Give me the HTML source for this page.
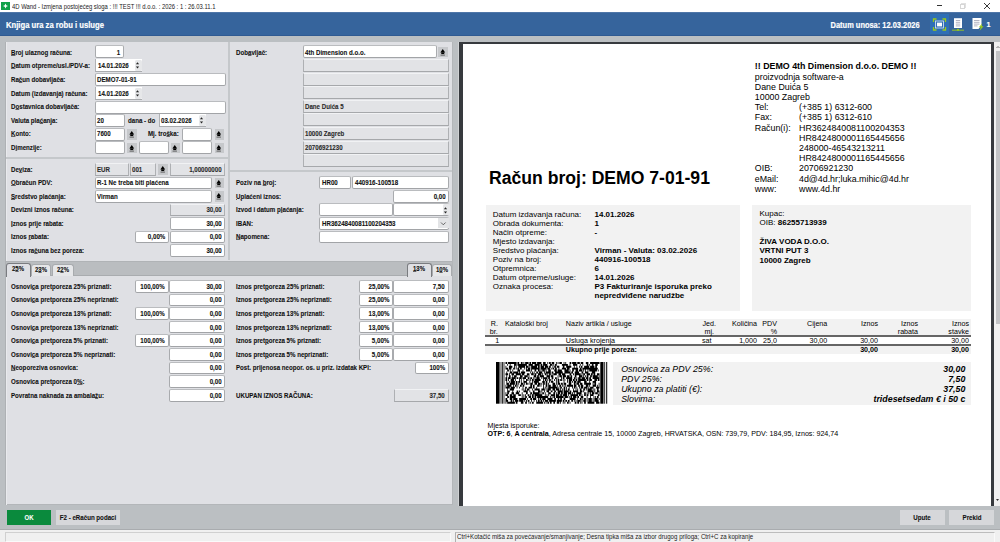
<!DOCTYPE html><html><head><meta charset="utf-8"><style>
html,body{margin:0;padding:0;width:1000px;height:542px;overflow:hidden;background:#bbbfc2;}
body{position:relative;font-family:"Liberation Sans",sans-serif;}
.t{position:absolute;white-space:nowrap;line-height:normal;}
.p{-webkit-text-stroke:0.1px currentColor;}
u{text-decoration-thickness:1px;text-underline-offset:-0.3px;text-decoration-color:rgba(0,0,0,.55);}
.r{position:absolute;box-sizing:border-box;}
</style></head><body>
<div class="r" style="left:0px;top:0px;width:1000px;height:12px;background:#ffffff;"></div>
<div class="r" style="left:1px;top:2px;width:9px;height:8px;background:#12a14a;"></div>
<svg class="r" style="left:1px;top:2px" width="9" height="8"><path d="M4.5 1.5 L5.3 3.2 L7 4 L5.3 4.8 L4.5 6.5 L3.7 4.8 L2 4 L3.7 3.2 Z" fill="#fff"/></svg>
<div class="t " style="left:12.0px;top:2.5px;font-size:7px;font-weight:normal;font-style:normal;color:#1a1a1a;transform:scaleX(0.84);transform-origin:0 0;">4D Wand - Izmjena postojećeg sloga : !!! TEST !!! d.o.o. : 2026 : 1 : 26.03.11.1</div>
<div class="r" style="left:937px;top:5px;width:5px;height:1px;background:#333;"></div>
<div class="r" style="left:961px;top:3px;width:5px;height:5px;background:transparent;border:1px solid #e0e0e0;"></div>
<div class="r" style="left:960px;top:4px;width:5px;height:5px;background:#fff;border:1px solid #d6d6d6;"></div>
<svg class="r" style="left:983px;top:2px" width="8" height="8"><path d="M1 1 L7 7 M7 1 L1 7" stroke="#222" stroke-width="0.9"/></svg>
<div class="r" style="left:0px;top:12px;width:1000px;height:24px;background:#36649c;"></div>
<div class="r" style="left:0px;top:12px;width:1000px;height:1px;background:#4f76a8;"></div>
<div class="r" style="left:0px;top:35px;width:1000px;height:1px;background:#2f5a92;"></div>
<div class="t " style="left:6.0px;top:19.9px;font-size:9px;font-weight:bold;font-style:normal;color:#fff;transform:scaleX(0.852);transform-origin:0 0;-webkit-text-stroke:0.2px #fff;">Knjiga ura za robu i usluge</div>
<div class="t " style="right:80.5px;top:19.9px;font-size:9px;font-weight:bold;font-style:normal;color:#fff;transform:scaleX(0.827);transform-origin:100% 0;-webkit-text-stroke:0.2px #fff;">Datum unosa: 12.03.2026</div>
<div class="r" style="left:930px;top:14px;width:19px;height:20px;background:#2f6fb5;"></div>
<svg class="r" style="left:930px;top:14px" width="19" height="20">
<path d="M3.5 8 V5 H6.5 M12.5 5 H15.5 V8 M15.5 13 V16 H12.5 M6.5 16 H3.5 V13" stroke="#9ccc18" stroke-width="1.3" fill="none"/>
<rect x="5.5" y="7" width="8" height="7" fill="none" stroke="#dfe8f5" stroke-width="0.8"/>
<rect x="7" y="8.6" width="5" height="3.8" fill="#fff"/></svg>
<svg class="r" style="left:951px;top:16px" width="14" height="16">
<rect x="3" y="2.2" width="8" height="9.8" fill="#fff"/>
<path d="M4.8 4.5 H9.2 M4.8 6.3 H9.2 M4.8 8.1 H9.2 M4.8 9.9 H9.2" stroke="#aab" stroke-width="0.9"/>
<path d="M1 14.2 H13" stroke="#9ccc18" stroke-width="0.9"/><circle cx="7" cy="13.8" r="1.1" fill="#9ccc18"/></svg>
<svg class="r" style="left:971px;top:16px" width="14" height="16">
<path d="M1.5 2 H10.5 V9.5 L7.5 13 H1.5 Z" fill="#fff"/>
<path d="M3 4.5 H8.5 M3 6.3 H8.5 M3 8.1 H8.5 M3 9.9 H6.5" stroke="#aab" stroke-width="0.9"/>
<path d="M11.2 7.5 L7.8 11.3 H9.8 L8.6 14.8 L12.6 10.3 H10.5 Z" fill="#9ccc18"/></svg>
<div class="t " style="right:10.0px;top:19.6px;font-size:8px;font-weight:bold;font-style:normal;color:#fff;transform:scaleX(0.9);transform-origin:100% 0;-webkit-text-stroke:0.2px #fff;">1</div>
<div class="r" style="left:5px;top:42px;width:448px;height:463px;background:#dfe0e4;border-left:1px solid #aeb1b4;border-right:1px solid #b3b6b9;border-bottom:1px solid #b3b6b9;"></div>
<div class="r" style="left:6px;top:42px;width:1px;height:463px;background:#e9eaed;"></div>
<div class="r" style="left:228px;top:42px;width:2px;height:218px;background:#c5c8cb;"></div>
<div class="r" style="left:6px;top:157px;width:222px;height:2px;background:#c5c8cb;"></div>
<div class="r" style="left:230px;top:170px;width:222px;height:2px;background:#c5c8cb;"></div>
<div class="r" style="left:6px;top:261px;width:446px;height:15px;background:#babdc0;border-top:1px solid #b0b3b6;border-bottom:1px solid #a9acaf;"></div>
<div class="t p" style="left:11.0px;top:47.7px;font-size:7.5px;font-weight:bold;font-style:normal;color:#111;transform:scaleX(0.82);transform-origin:0 0;"><u>B</u>roj ulaznog računa:</div>
<div class="t p" style="left:11.0px;top:61.3px;font-size:7.5px;font-weight:bold;font-style:normal;color:#111;transform:scaleX(0.82);transform-origin:0 0;"><u>D</u>atum otpreme/usl./PDV-a:</div>
<div class="t p" style="left:11.0px;top:74.9px;font-size:7.5px;font-weight:bold;font-style:normal;color:#111;transform:scaleX(0.82);transform-origin:0 0;">Ra<u>č</u>un dobavljača:</div>
<div class="t p" style="left:11.0px;top:88.5px;font-size:7.5px;font-weight:bold;font-style:normal;color:#111;transform:scaleX(0.82);transform-origin:0 0;">Dat<u>u</u>m (izdavanja) računa:</div>
<div class="t p" style="left:11.0px;top:102.1px;font-size:7.5px;font-weight:bold;font-style:normal;color:#111;transform:scaleX(0.82);transform-origin:0 0;">D<u>o</u>stavnica dobavljača:</div>
<div class="t p" style="left:11.0px;top:115.7px;font-size:7.5px;font-weight:bold;font-style:normal;color:#111;transform:scaleX(0.82);transform-origin:0 0;">Valuta pla<u>ć</u>anja:</div>
<div class="t p" style="left:11.0px;top:129.3px;font-size:7.5px;font-weight:bold;font-style:normal;color:#111;transform:scaleX(0.82);transform-origin:0 0;"><u>K</u>onto:</div>
<div class="t p" style="left:11.0px;top:142.9px;font-size:7.5px;font-weight:bold;font-style:normal;color:#111;transform:scaleX(0.82);transform-origin:0 0;">D<u>i</u>menzije:</div>
<div class="r" style="left:95px;top:45px;width:29px;height:13px;background:#ffffff;border:1px solid #a9abae;border-radius:2px;border-top-color:#babcbf;border-bottom:1.6px solid #a2a4a7;"></div>
<div class="t p" style="right:880.0px;top:47.7px;font-size:7.5px;font-weight:bold;font-style:normal;color:#111;transform:scaleX(0.82);transform-origin:100% 0;">1</div>
<div class="r" style="left:95px;top:59px;width:47px;height:13px;background:#ffffff;border-left:1px solid #b0b2b5;border-bottom:1.5px solid #a9abae;"></div>
<div class="t p" style="left:97.5px;top:61.3px;font-size:7.5px;font-weight:bold;font-style:normal;color:#111;transform:scaleX(0.82);transform-origin:0 0;">14.01.2026</div>
<div class="r" style="left:135px;top:60px;width:7px;height:11px;background:#e6e7e9;border-radius:1.5px;"></div>
<svg class="r" style="left:134px;top:59px" width="7" height="13"><path d="M1.9 5.3 L3.5 3.3 L5.1 5.3 Z M1.9 7.6 L3.5 9.6 L5.1 7.6 Z" fill="#222"/></svg>
<div class="r" style="left:95px;top:73px;width:131px;height:13px;background:#ffffff;border:1px solid #a9abae;border-radius:2px;border-top-color:#babcbf;border-bottom:1.6px solid #a2a4a7;"></div>
<div class="t p" style="left:97.0px;top:74.9px;font-size:7.5px;font-weight:bold;font-style:normal;color:#111;transform:scaleX(0.82);transform-origin:0 0;">DEMO7-01-91</div>
<div class="r" style="left:95px;top:87px;width:47px;height:13px;background:#ffffff;border-left:1px solid #b0b2b5;border-bottom:1.5px solid #a9abae;"></div>
<div class="t p" style="left:97.5px;top:88.5px;font-size:7.5px;font-weight:bold;font-style:normal;color:#111;transform:scaleX(0.82);transform-origin:0 0;">14.01.2026</div>
<div class="r" style="left:135px;top:88px;width:7px;height:11px;background:#e6e7e9;border-radius:1.5px;"></div>
<svg class="r" style="left:134px;top:87px" width="7" height="13"><path d="M1.9 5.3 L3.5 3.3 L5.1 5.3 Z M1.9 7.6 L3.5 9.6 L5.1 7.6 Z" fill="#222"/></svg>
<div class="r" style="left:95px;top:101px;width:131px;height:13px;background:#ffffff;border:1px solid #a9abae;border-radius:2px;border-top-color:#babcbf;border-bottom:1.6px solid #a2a4a7;"></div>
<div class="r" style="left:95px;top:114px;width:30px;height:13px;background:#ffffff;border:1px solid #a9abae;border-radius:2px;border-top-color:#babcbf;border-bottom:1.6px solid #a2a4a7;"></div>
<div class="t p" style="left:97.0px;top:115.7px;font-size:7.5px;font-weight:bold;font-style:normal;color:#111;transform:scaleX(0.82);transform-origin:0 0;">20</div>
<div class="t p" style="left:128.0px;top:115.7px;font-size:7.5px;font-weight:bold;font-style:normal;color:#111;transform:scaleX(0.82);transform-origin:0 0;">dana - do</div>
<div class="r" style="left:159px;top:114px;width:47px;height:13px;background:#ffffff;border-left:1px solid #b0b2b5;border-bottom:1.5px solid #a9abae;"></div>
<div class="t p" style="left:161.0px;top:115.7px;font-size:7.5px;font-weight:bold;font-style:normal;color:#111;transform:scaleX(0.82);transform-origin:0 0;">03.02.2026</div>
<div class="r" style="left:199px;top:115px;width:7px;height:11px;background:#e6e7e9;border-radius:1.5px;"></div>
<svg class="r" style="left:198px;top:114px" width="7" height="13"><path d="M1.9 5.3 L3.5 3.3 L5.1 5.3 Z M1.9 7.6 L3.5 9.6 L5.1 7.6 Z" fill="#222"/></svg>
<div class="r" style="left:95px;top:128px;width:30px;height:13px;background:#ffffff;border:1px solid #a9abae;border-radius:2px;border-top-color:#babcbf;border-bottom:1.6px solid #a2a4a7;"></div>
<div class="t p" style="left:97.0px;top:129.3px;font-size:7.5px;font-weight:bold;font-style:normal;color:#111;transform:scaleX(0.82);transform-origin:0 0;">7600</div>
<div class="r" style="left:127px;top:129px;width:10px;height:11px;background:#c6c8cb;"></div>
<svg class="r" style="left:127px;top:129px" width="10" height="10"><path d="M2.35 5.55 L4.75 2.05 L7.15 5.55 Z" fill="#000"/><rect x="3.25" y="5.35" width="3" height="1.7" fill="#000"/><rect x="2.55" y="7.65" width="4.4" height="0.9" fill="#555"/></svg>
<div class="t p" style="left:148.0px;top:129.3px;font-size:7.5px;font-weight:bold;font-style:normal;color:#111;transform:scaleX(0.82);transform-origin:0 0;">Mj. tro<u>š</u>ka:</div>
<div class="r" style="left:182px;top:128px;width:30px;height:13px;background:#ffffff;border:1px solid #a9abae;border-radius:2px;border-top-color:#babcbf;border-bottom:1.6px solid #a2a4a7;"></div>
<div class="r" style="left:215px;top:129px;width:9px;height:11px;background:#c6c8cb;"></div>
<svg class="r" style="left:214px;top:129px" width="10" height="10"><path d="M2.35 5.55 L4.75 2.05 L7.15 5.55 Z" fill="#000"/><rect x="3.25" y="5.35" width="3" height="1.7" fill="#000"/><rect x="2.55" y="7.65" width="4.4" height="0.9" fill="#555"/></svg>
<div class="r" style="left:95px;top:141px;width:30px;height:13px;background:#ffffff;border:1px solid #a9abae;border-radius:2px;border-top-color:#babcbf;border-bottom:1.6px solid #a2a4a7;"></div>
<div class="r" style="left:127px;top:143px;width:10px;height:10px;background:#c6c8cb;"></div>
<svg class="r" style="left:127px;top:143px" width="10" height="10"><path d="M2.35 5.55 L4.75 2.05 L7.15 5.55 Z" fill="#000"/><rect x="3.25" y="5.35" width="3" height="1.7" fill="#000"/><rect x="2.55" y="7.65" width="4.4" height="0.9" fill="#555"/></svg>
<div class="r" style="left:139px;top:141px;width:30px;height:13px;background:#ffffff;border:1px solid #a9abae;border-radius:2px;border-top-color:#babcbf;border-bottom:1.6px solid #a2a4a7;"></div>
<div class="r" style="left:171px;top:143px;width:9px;height:10px;background:#c6c8cb;"></div>
<svg class="r" style="left:170px;top:143px" width="10" height="10"><path d="M2.35 5.55 L4.75 2.05 L7.15 5.55 Z" fill="#000"/><rect x="3.25" y="5.35" width="3" height="1.7" fill="#000"/><rect x="2.55" y="7.65" width="4.4" height="0.9" fill="#555"/></svg>
<div class="r" style="left:182px;top:141px;width:30px;height:13px;background:#ffffff;border:1px solid #a9abae;border-radius:2px;border-top-color:#babcbf;border-bottom:1.6px solid #a2a4a7;"></div>
<div class="r" style="left:215px;top:143px;width:9px;height:10px;background:#c6c8cb;"></div>
<svg class="r" style="left:214px;top:143px" width="10" height="10"><path d="M2.35 5.55 L4.75 2.05 L7.15 5.55 Z" fill="#000"/><rect x="3.25" y="5.35" width="3" height="1.7" fill="#000"/><rect x="2.55" y="7.65" width="4.4" height="0.9" fill="#555"/></svg>
<div class="t p" style="left:235.5px;top:47.7px;font-size:7.5px;font-weight:bold;font-style:normal;color:#111;transform:scaleX(0.82);transform-origin:0 0;">Dob<u>a</u>vljač:</div>
<div class="r" style="left:303px;top:45px;width:134px;height:13px;background:#ffffff;border:1px solid #a9abae;border-radius:2px;border-top-color:#babcbf;border-bottom:1.6px solid #a2a4a7;"></div>
<div class="t p" style="left:305.0px;top:47.7px;font-size:7.5px;font-weight:bold;font-style:normal;color:#111;transform:scaleX(0.82);transform-origin:0 0;">4th Dimension d.o.o.</div>
<div class="r" style="left:438px;top:47px;width:10px;height:10px;background:#c6c8cb;"></div>
<svg class="r" style="left:438px;top:47px" width="10" height="10"><path d="M2.35 5.55 L4.75 2.05 L7.15 5.55 Z" fill="#000"/><rect x="3.25" y="5.35" width="3" height="1.7" fill="#000"/><rect x="2.55" y="7.65" width="4.4" height="0.9" fill="#555"/></svg>
<div class="r" style="left:303px;top:59px;width:146px;height:13px;background:#e2e3e6;border:1px solid #aeb0b3;border-top-color:#f1f2f4;border-bottom:1.6px solid #a6a8ab;"></div>
<div class="r" style="left:303px;top:73px;width:146px;height:13px;background:#e2e3e6;border:1px solid #aeb0b3;border-top-color:#f1f2f4;border-bottom:1.6px solid #a6a8ab;"></div>
<div class="r" style="left:303px;top:86px;width:146px;height:13px;background:#e2e3e6;border:1px solid #aeb0b3;border-top-color:#f1f2f4;border-bottom:1.6px solid #a6a8ab;"></div>
<div class="r" style="left:303px;top:100px;width:146px;height:13px;background:#e2e3e6;border:1px solid #aeb0b3;border-top-color:#f1f2f4;border-bottom:1.6px solid #a6a8ab;"></div>
<div class="t p" style="left:305.0px;top:102.1px;font-size:7.5px;font-weight:bold;font-style:normal;color:#2a2a2a;transform:scaleX(0.82);transform-origin:0 0;">Dane Duića 5</div>
<div class="r" style="left:303px;top:113px;width:146px;height:13px;background:#e2e3e6;border:1px solid #aeb0b3;border-top-color:#f1f2f4;border-bottom:1.6px solid #a6a8ab;"></div>
<div class="r" style="left:303px;top:127px;width:146px;height:13px;background:#e2e3e6;border:1px solid #aeb0b3;border-top-color:#f1f2f4;border-bottom:1.6px solid #a6a8ab;"></div>
<div class="t p" style="left:305.0px;top:129.3px;font-size:7.5px;font-weight:bold;font-style:normal;color:#2a2a2a;transform:scaleX(0.82);transform-origin:0 0;">10000 Zagreb</div>
<div class="r" style="left:303px;top:141px;width:146px;height:13px;background:#e2e3e6;border:1px solid #aeb0b3;border-top-color:#f1f2f4;border-bottom:1.6px solid #a6a8ab;"></div>
<div class="t p" style="left:305.0px;top:142.9px;font-size:7.5px;font-weight:bold;font-style:normal;color:#2a2a2a;transform:scaleX(0.82);transform-origin:0 0;">20706921230</div>
<div class="r" style="left:303px;top:154px;width:146px;height:13px;background:#e2e3e6;border:1px solid #aeb0b3;border-top-color:#f1f2f4;border-bottom:1.6px solid #a6a8ab;"></div>
<div class="t p" style="left:11.0px;top:164.6px;font-size:7.5px;font-weight:bold;font-style:normal;color:#111;transform:scaleX(0.82);transform-origin:0 0;">De<u>v</u>iza:</div>
<div class="r" style="left:95px;top:163px;width:34px;height:13px;background:#e2e3e6;border:1px solid #aeb0b3;border-top-color:#f1f2f4;border-bottom:1.6px solid #a6a8ab;"></div>
<div class="t p" style="left:97.0px;top:164.6px;font-size:7.5px;font-weight:bold;font-style:normal;color:#2a2a2a;transform:scaleX(0.82);transform-origin:0 0;">EUR</div>
<div class="r" style="left:130px;top:163px;width:26px;height:13px;background:#e2e3e6;border:1px solid #aeb0b3;border-top-color:#f1f2f4;border-bottom:1.6px solid #a6a8ab;"></div>
<div class="t p" style="left:132.0px;top:164.6px;font-size:7.5px;font-weight:bold;font-style:normal;color:#2a2a2a;transform:scaleX(0.82);transform-origin:0 0;">001</div>
<div class="r" style="left:158px;top:164px;width:10px;height:11px;background:#c6c8cb;"></div>
<svg class="r" style="left:158px;top:164px" width="10" height="10"><path d="M2.35 5.55 L4.75 2.05 L7.15 5.55 Z" fill="#000"/><rect x="3.25" y="5.35" width="3" height="1.7" fill="#000"/><rect x="2.55" y="7.65" width="4.4" height="0.9" fill="#555"/></svg>
<div class="r" style="left:170px;top:163px;width:55px;height:13px;background:#e2e3e6;border:1px solid #aeb0b3;border-top-color:#f1f2f4;border-bottom:1.6px solid #a6a8ab;"></div>
<div class="t p" style="right:778.5px;top:164.6px;font-size:7.5px;font-weight:bold;font-style:normal;color:#2a2a2a;transform:scaleX(0.82);transform-origin:100% 0;">1,00000000</div>
<div class="t p" style="left:11.0px;top:178.2px;font-size:7.5px;font-weight:bold;font-style:normal;color:#111;transform:scaleX(0.82);transform-origin:0 0;"><u>O</u>bračun PDV:</div>
<div class="r" style="left:95px;top:177px;width:117px;height:12px;background:#ffffff;border:1px solid #a9abae;border-radius:2px;border-top-color:#babcbf;border-bottom:1.6px solid #a2a4a7;"></div>
<div class="t p" style="left:97.0px;top:178.2px;font-size:7.5px;font-weight:bold;font-style:normal;color:#111;transform:scaleX(0.82);transform-origin:0 0;">R-1 Ne treba biti plaćena</div>
<div class="r" style="left:215px;top:178px;width:9px;height:10px;background:#c6c8cb;"></div>
<svg class="r" style="left:214px;top:178px" width="10" height="10"><path d="M2.35 5.55 L4.75 2.05 L7.15 5.55 Z" fill="#000"/><rect x="3.25" y="5.35" width="3" height="1.7" fill="#000"/><rect x="2.55" y="7.65" width="4.4" height="0.9" fill="#555"/></svg>
<div class="t p" style="left:11.0px;top:191.7px;font-size:7.5px;font-weight:bold;font-style:normal;color:#111;transform:scaleX(0.82);transform-origin:0 0;"><u>S</u>redstvo plaćanja:</div>
<div class="r" style="left:95px;top:190px;width:117px;height:13px;background:#ffffff;border:1px solid #a9abae;border-radius:2px;border-top-color:#babcbf;border-bottom:1.6px solid #a2a4a7;"></div>
<div class="t p" style="left:97.0px;top:191.7px;font-size:7.5px;font-weight:bold;font-style:normal;color:#111;transform:scaleX(0.82);transform-origin:0 0;">Virman</div>
<div class="r" style="left:215px;top:191px;width:9px;height:11px;background:#c6c8cb;"></div>
<svg class="r" style="left:214px;top:191px" width="10" height="10"><path d="M2.35 5.55 L4.75 2.05 L7.15 5.55 Z" fill="#000"/><rect x="3.25" y="5.35" width="3" height="1.7" fill="#000"/><rect x="2.55" y="7.65" width="4.4" height="0.9" fill="#555"/></svg>
<div class="t p" style="left:11.0px;top:205.3px;font-size:7.5px;font-weight:bold;font-style:normal;color:#111;transform:scaleX(0.82);transform-origin:0 0;">Devizni iznos računa:</div>
<div class="r" style="left:170px;top:204px;width:55px;height:12px;background:#e2e3e6;border:1px solid #aeb0b3;border-top-color:#f1f2f4;border-bottom:1.6px solid #a6a8ab;"></div>
<div class="t p" style="right:778.5px;top:205.3px;font-size:7.5px;font-weight:bold;font-style:normal;color:#2a2a2a;transform:scaleX(0.82);transform-origin:100% 0;">30,00</div>
<div class="t p" style="left:11.0px;top:218.8px;font-size:7.5px;font-weight:bold;font-style:normal;color:#111;transform:scaleX(0.82);transform-origin:0 0;"><u>I</u>znos prije rabata:</div>
<div class="r" style="left:170px;top:217px;width:55px;height:13px;background:#ffffff;border:1px solid #a9abae;border-radius:2px;border-top-color:#babcbf;border-bottom:1.6px solid #a2a4a7;"></div>
<div class="t p" style="right:778.5px;top:218.8px;font-size:7.5px;font-weight:bold;font-style:normal;color:#111;transform:scaleX(0.82);transform-origin:100% 0;">30,00</div>
<div class="t p" style="left:11.0px;top:232.4px;font-size:7.5px;font-weight:bold;font-style:normal;color:#111;transform:scaleX(0.82);transform-origin:0 0;">Iznos <u>r</u>abata:</div>
<div class="r" style="left:135px;top:231px;width:34px;height:12px;background:#ffffff;border:1px solid #a9abae;border-radius:2px;border-top-color:#babcbf;border-bottom:1.6px solid #a2a4a7;"></div>
<div class="t p" style="right:835.0px;top:232.4px;font-size:7.5px;font-weight:bold;font-style:normal;color:#111;transform:scaleX(0.82);transform-origin:100% 0;">0,00%</div>
<div class="r" style="left:170px;top:231px;width:55px;height:12px;background:#ffffff;border:1px solid #a9abae;border-radius:2px;border-top-color:#babcbf;border-bottom:1.6px solid #a2a4a7;"></div>
<div class="t p" style="right:778.5px;top:232.4px;font-size:7.5px;font-weight:bold;font-style:normal;color:#111;transform:scaleX(0.82);transform-origin:100% 0;">0,00</div>
<div class="t p" style="left:11.0px;top:245.9px;font-size:7.5px;font-weight:bold;font-style:normal;color:#111;transform:scaleX(0.82);transform-origin:0 0;">Iznos ra<u>č</u>una bez poreza:</div>
<div class="r" style="left:170px;top:244px;width:55px;height:13px;background:#ffffff;border:1px solid #a9abae;border-radius:2px;border-top-color:#babcbf;border-bottom:1.6px solid #a2a4a7;"></div>
<div class="t p" style="right:778.5px;top:245.9px;font-size:7.5px;font-weight:bold;font-style:normal;color:#111;transform:scaleX(0.82);transform-origin:100% 0;">30,00</div>
<div class="t p" style="left:235.5px;top:177.9px;font-size:7.5px;font-weight:bold;font-style:normal;color:#111;transform:scaleX(0.82);transform-origin:0 0;">Poziv na <u>b</u>roj:</div>
<div class="r" style="left:319px;top:176px;width:32px;height:13px;background:#ffffff;border:1px solid #a9abae;border-radius:2px;border-top-color:#babcbf;border-bottom:1.6px solid #a2a4a7;"></div>
<div class="t p" style="left:321.5px;top:177.9px;font-size:7.5px;font-weight:bold;font-style:normal;color:#111;transform:scaleX(0.82);transform-origin:0 0;">HR00</div>
<div class="r" style="left:352px;top:176px;width:97px;height:13px;background:#ffffff;border:1px solid #a9abae;border-radius:2px;border-top-color:#babcbf;border-bottom:1.6px solid #a2a4a7;"></div>
<div class="t p" style="left:354.5px;top:177.9px;font-size:7.5px;font-weight:bold;font-style:normal;color:#111;transform:scaleX(0.82);transform-origin:0 0;">440916-100518</div>
<div class="t p" style="left:235.5px;top:191.5px;font-size:7.5px;font-weight:bold;font-style:normal;color:#111;transform:scaleX(0.82);transform-origin:0 0;"><u>U</u>plaćeni iznos:</div>
<div class="r" style="left:393px;top:190px;width:56px;height:13px;background:#ffffff;border:1px solid #a9abae;border-radius:2px;border-top-color:#babcbf;border-bottom:1.6px solid #a2a4a7;"></div>
<div class="t p" style="right:554.5px;top:191.5px;font-size:7.5px;font-weight:bold;font-style:normal;color:#111;transform:scaleX(0.82);transform-origin:100% 0;">0,00</div>
<div class="t p" style="left:235.5px;top:205.1px;font-size:7.5px;font-weight:bold;font-style:normal;color:#111;transform:scaleX(0.82);transform-origin:0 0;">Izvod i datum p<u>l</u>aćanja:</div>
<div class="r" style="left:319px;top:203px;width:74px;height:13px;background:#ffffff;border:1px solid #a9abae;border-radius:2px;border-top-color:#babcbf;border-bottom:1.6px solid #a2a4a7;"></div>
<div class="r" style="left:393px;top:203px;width:56px;height:13px;background:#ffffff;border:1px solid #a9abae;border-radius:2px;border-top-color:#babcbf;border-bottom:1.6px solid #a2a4a7;"></div>
<div class="r" style="left:443px;top:204px;width:7px;height:11px;background:#e6e7e9;border-radius:1.5px;"></div>
<svg class="r" style="left:442px;top:204px" width="7" height="12"><path d="M1.9 5.3 L3.5 3.3 L5.1 5.3 Z M1.9 7.6 L3.5 9.6 L5.1 7.6 Z" fill="#222"/></svg>
<div class="t p" style="left:235.5px;top:218.7px;font-size:7.5px;font-weight:bold;font-style:normal;color:#111;transform:scaleX(0.82);transform-origin:0 0;">IBAN:</div>
<div class="r" style="left:319px;top:217px;width:130px;height:13px;background:#ffffff;border:1px solid #a9abae;border-radius:2px;border-top-color:#babcbf;border-bottom:1.6px solid #a2a4a7;"></div>
<div class="t p" style="left:321.5px;top:218.7px;font-size:7.5px;font-weight:bold;font-style:normal;color:#111;transform:scaleX(0.82);transform-origin:0 0;">HR3624840081100204353</div>
<div class="r" style="left:438px;top:218px;width:11px;height:10px;background:#e3e4e6;"></div>
<svg class="r" style="left:438px;top:218px" width="11" height="11"><path d="M3 4.5 L5.3 6.8 L7.6 4.5" stroke="#555" stroke-width="0.9" fill="none"/></svg>
<div class="t p" style="left:235.5px;top:232.3px;font-size:7.5px;font-weight:bold;font-style:normal;color:#111;transform:scaleX(0.82);transform-origin:0 0;"><u>N</u>apomena:</div>
<div class="r" style="left:319px;top:231px;width:130px;height:12px;background:#ffffff;border:1px solid #a9abae;border-radius:2px;border-top-color:#babcbf;border-bottom:1.6px solid #a2a4a7;"></div>
<div class="r" style="left:6px;top:263px;width:25px;height:14px;background:#dfe0e4;border:1px solid #7a7c80;border-bottom:none;border-radius:3px 3px 0 0;"></div>
<div class="t p" style="left:-181.8px;width:400px;text-align:center;top:264.2px;font-size:7.5px;font-weight:bold;font-style:normal;color:#111;transform:scaleX(0.8);transform-origin:50% 0;">2<u>5</u>%</div>
<div class="r" style="left:31px;top:264px;width:20px;height:12px;background:#e6e7e9;border:1px solid #a8abae;border-bottom:none;border-radius:3px 3px 0 0;"></div>
<div class="t p" style="left:-159.0px;width:400px;text-align:center;top:264.6px;font-size:7.5px;font-weight:bold;font-style:normal;color:#111;transform:scaleX(0.8);transform-origin:50% 0;">2<u>3</u>%</div>
<div class="r" style="left:52px;top:264px;width:22px;height:12px;background:#e6e7e9;border:1px solid #a8abae;border-bottom:none;border-radius:3px 3px 0 0;"></div>
<div class="t p" style="left:-137.5px;width:400px;text-align:center;top:264.6px;font-size:7.5px;font-weight:bold;font-style:normal;color:#111;transform:scaleX(0.8);transform-origin:50% 0;">2<u>2</u>%</div>
<div class="r" style="left:407px;top:263px;width:25px;height:14px;background:#dfe0e4;border:1px solid #7a7c80;border-bottom:none;border-radius:3px 3px 0 0;"></div>
<div class="t p" style="left:219.2px;width:400px;text-align:center;top:264.2px;font-size:7.5px;font-weight:bold;font-style:normal;color:#111;transform:scaleX(0.8);transform-origin:50% 0;"><u>1</u>3%</div>
<div class="r" style="left:432px;top:264px;width:20px;height:12px;background:#e6e7e9;border:1px solid #a8abae;border-bottom:none;border-radius:3px 3px 0 0;"></div>
<div class="t p" style="left:242.0px;width:400px;text-align:center;top:264.6px;font-size:7.5px;font-weight:bold;font-style:normal;color:#111;transform:scaleX(0.8);transform-origin:50% 0;">1<u>0</u>%</div>
<div class="t p" style="left:11.0px;top:281.7px;font-size:7.5px;font-weight:bold;font-style:normal;color:#111;transform:scaleX(0.82);transform-origin:0 0;">Osnovi<u>c</u>a pretporeza 25% priznati:</div>
<div class="r" style="left:135px;top:280px;width:34px;height:13px;background:#ffffff;border:1px solid #a9abae;border-radius:2px;border-top-color:#babcbf;border-bottom:1.6px solid #a2a4a7;"></div>
<div class="t p" style="right:835.0px;top:281.7px;font-size:7.5px;font-weight:bold;font-style:normal;color:#111;transform:scaleX(0.82);transform-origin:100% 0;">100,00%</div>
<div class="r" style="left:169px;top:280px;width:56px;height:13px;background:#ffffff;border:1px solid #a9abae;border-radius:2px;border-top-color:#babcbf;border-bottom:1.6px solid #a2a4a7;"></div>
<div class="t p" style="right:778.5px;top:281.7px;font-size:7.5px;font-weight:bold;font-style:normal;color:#111;transform:scaleX(0.82);transform-origin:100% 0;">30,00</div>
<div class="t p" style="left:11.0px;top:295.3px;font-size:7.5px;font-weight:bold;font-style:normal;color:#111;transform:scaleX(0.82);transform-origin:0 0;">Osnovi<u>c</u>a pretporeza 25% nepriznati:</div>
<div class="r" style="left:169px;top:294px;width:56px;height:12px;background:#ffffff;border:1px solid #a9abae;border-radius:2px;border-top-color:#babcbf;border-bottom:1.6px solid #a2a4a7;"></div>
<div class="t p" style="right:778.5px;top:295.3px;font-size:7.5px;font-weight:bold;font-style:normal;color:#111;transform:scaleX(0.82);transform-origin:100% 0;">0,00</div>
<div class="t p" style="left:11.0px;top:309.0px;font-size:7.5px;font-weight:bold;font-style:normal;color:#111;transform:scaleX(0.82);transform-origin:0 0;">Osnovi<u>c</u>a pretporeza 13% priznati:</div>
<div class="r" style="left:135px;top:307px;width:34px;height:13px;background:#ffffff;border:1px solid #a9abae;border-radius:2px;border-top-color:#babcbf;border-bottom:1.6px solid #a2a4a7;"></div>
<div class="t p" style="right:835.0px;top:309.0px;font-size:7.5px;font-weight:bold;font-style:normal;color:#111;transform:scaleX(0.82);transform-origin:100% 0;">100,00%</div>
<div class="r" style="left:169px;top:307px;width:56px;height:13px;background:#ffffff;border:1px solid #a9abae;border-radius:2px;border-top-color:#babcbf;border-bottom:1.6px solid #a2a4a7;"></div>
<div class="t p" style="right:778.5px;top:309.0px;font-size:7.5px;font-weight:bold;font-style:normal;color:#111;transform:scaleX(0.82);transform-origin:100% 0;">0,00</div>
<div class="t p" style="left:11.0px;top:322.6px;font-size:7.5px;font-weight:bold;font-style:normal;color:#111;transform:scaleX(0.82);transform-origin:0 0;">Osnovi<u>c</u>a pretporeza 13% nepriznati:</div>
<div class="r" style="left:169px;top:321px;width:56px;height:12px;background:#ffffff;border:1px solid #a9abae;border-radius:2px;border-top-color:#babcbf;border-bottom:1.6px solid #a2a4a7;"></div>
<div class="t p" style="right:778.5px;top:322.6px;font-size:7.5px;font-weight:bold;font-style:normal;color:#111;transform:scaleX(0.82);transform-origin:100% 0;">0,00</div>
<div class="t p" style="left:11.0px;top:336.2px;font-size:7.5px;font-weight:bold;font-style:normal;color:#111;transform:scaleX(0.82);transform-origin:0 0;">Osnovi<u>c</u>a pretporeza 5% priznati:</div>
<div class="r" style="left:135px;top:334px;width:34px;height:13px;background:#ffffff;border:1px solid #a9abae;border-radius:2px;border-top-color:#babcbf;border-bottom:1.6px solid #a2a4a7;"></div>
<div class="t p" style="right:835.0px;top:336.2px;font-size:7.5px;font-weight:bold;font-style:normal;color:#111;transform:scaleX(0.82);transform-origin:100% 0;">100,00%</div>
<div class="r" style="left:169px;top:334px;width:56px;height:13px;background:#ffffff;border:1px solid #a9abae;border-radius:2px;border-top-color:#babcbf;border-bottom:1.6px solid #a2a4a7;"></div>
<div class="t p" style="right:778.5px;top:336.2px;font-size:7.5px;font-weight:bold;font-style:normal;color:#111;transform:scaleX(0.82);transform-origin:100% 0;">0,00</div>
<div class="t p" style="left:11.0px;top:349.8px;font-size:7.5px;font-weight:bold;font-style:normal;color:#111;transform:scaleX(0.82);transform-origin:0 0;">Osnovi<u>c</u>a pretporeza 5% nepriznati:</div>
<div class="r" style="left:169px;top:348px;width:56px;height:13px;background:#ffffff;border:1px solid #a9abae;border-radius:2px;border-top-color:#babcbf;border-bottom:1.6px solid #a2a4a7;"></div>
<div class="t p" style="right:778.5px;top:349.8px;font-size:7.5px;font-weight:bold;font-style:normal;color:#111;transform:scaleX(0.82);transform-origin:100% 0;">0,00</div>
<div class="t p" style="left:11.0px;top:363.4px;font-size:7.5px;font-weight:bold;font-style:normal;color:#111;transform:scaleX(0.82);transform-origin:0 0;"><u>N</u>eoporeziva osnovica:</div>
<div class="r" style="left:169px;top:362px;width:56px;height:12px;background:#ffffff;border:1px solid #a9abae;border-radius:2px;border-top-color:#babcbf;border-bottom:1.6px solid #a2a4a7;"></div>
<div class="t p" style="right:778.5px;top:363.4px;font-size:7.5px;font-weight:bold;font-style:normal;color:#111;transform:scaleX(0.82);transform-origin:100% 0;">0,00</div>
<div class="t p" style="left:11.0px;top:377.1px;font-size:7.5px;font-weight:bold;font-style:normal;color:#111;transform:scaleX(0.82);transform-origin:0 0;">Osnovica pretporeza 0<u>%</u>:</div>
<div class="r" style="left:169px;top:375px;width:56px;height:13px;background:#ffffff;border:1px solid #a9abae;border-radius:2px;border-top-color:#babcbf;border-bottom:1.6px solid #a2a4a7;"></div>
<div class="t p" style="right:778.5px;top:377.1px;font-size:7.5px;font-weight:bold;font-style:normal;color:#111;transform:scaleX(0.82);transform-origin:100% 0;">0,00</div>
<div class="t p" style="left:11.0px;top:390.7px;font-size:7.5px;font-weight:bold;font-style:normal;color:#111;transform:scaleX(0.82);transform-origin:0 0;">Povratna naknada za ambala<u>ž</u>u:</div>
<div class="r" style="left:169px;top:389px;width:56px;height:13px;background:#ffffff;border:1px solid #a9abae;border-radius:2px;border-top-color:#babcbf;border-bottom:1.6px solid #a2a4a7;"></div>
<div class="t p" style="right:778.5px;top:390.7px;font-size:7.5px;font-weight:bold;font-style:normal;color:#111;transform:scaleX(0.82);transform-origin:100% 0;">0,00</div>
<div class="t p" style="left:235.5px;top:281.7px;font-size:7.5px;font-weight:bold;font-style:normal;color:#111;transform:scaleX(0.82);transform-origin:0 0;">Iznos pret<u>p</u>oreza 25% priznati:</div>
<div class="r" style="left:359px;top:280px;width:34px;height:13px;background:#ffffff;border:1px solid #a9abae;border-radius:2px;border-top-color:#babcbf;border-bottom:1.6px solid #a2a4a7;"></div>
<div class="t p" style="right:611.0px;top:281.7px;font-size:7.5px;font-weight:bold;font-style:normal;color:#111;transform:scaleX(0.82);transform-origin:100% 0;">25,00%</div>
<div class="r" style="left:393px;top:280px;width:56px;height:13px;background:#ffffff;border:1px solid #a9abae;border-radius:2px;border-top-color:#babcbf;border-bottom:1.6px solid #a2a4a7;"></div>
<div class="t p" style="right:555.0px;top:281.7px;font-size:7.5px;font-weight:bold;font-style:normal;color:#111;transform:scaleX(0.82);transform-origin:100% 0;">7,50</div>
<div class="t p" style="left:235.5px;top:295.3px;font-size:7.5px;font-weight:bold;font-style:normal;color:#111;transform:scaleX(0.82);transform-origin:0 0;">Iznos pret<u>p</u>oreza 25% nepriznati:</div>
<div class="r" style="left:359px;top:294px;width:34px;height:12px;background:#ffffff;border:1px solid #a9abae;border-radius:2px;border-top-color:#babcbf;border-bottom:1.6px solid #a2a4a7;"></div>
<div class="t p" style="right:611.0px;top:295.3px;font-size:7.5px;font-weight:bold;font-style:normal;color:#111;transform:scaleX(0.82);transform-origin:100% 0;">25,00%</div>
<div class="r" style="left:393px;top:294px;width:56px;height:12px;background:#ffffff;border:1px solid #a9abae;border-radius:2px;border-top-color:#babcbf;border-bottom:1.6px solid #a2a4a7;"></div>
<div class="t p" style="right:555.0px;top:295.3px;font-size:7.5px;font-weight:bold;font-style:normal;color:#111;transform:scaleX(0.82);transform-origin:100% 0;">0,00</div>
<div class="t p" style="left:235.5px;top:309.0px;font-size:7.5px;font-weight:bold;font-style:normal;color:#111;transform:scaleX(0.82);transform-origin:0 0;">Iznos pret<u>p</u>oreza 13% priznati:</div>
<div class="r" style="left:359px;top:307px;width:34px;height:13px;background:#ffffff;border:1px solid #a9abae;border-radius:2px;border-top-color:#babcbf;border-bottom:1.6px solid #a2a4a7;"></div>
<div class="t p" style="right:611.0px;top:309.0px;font-size:7.5px;font-weight:bold;font-style:normal;color:#111;transform:scaleX(0.82);transform-origin:100% 0;">13,00%</div>
<div class="r" style="left:393px;top:307px;width:56px;height:13px;background:#ffffff;border:1px solid #a9abae;border-radius:2px;border-top-color:#babcbf;border-bottom:1.6px solid #a2a4a7;"></div>
<div class="t p" style="right:555.0px;top:309.0px;font-size:7.5px;font-weight:bold;font-style:normal;color:#111;transform:scaleX(0.82);transform-origin:100% 0;">0,00</div>
<div class="t p" style="left:235.5px;top:322.6px;font-size:7.5px;font-weight:bold;font-style:normal;color:#111;transform:scaleX(0.82);transform-origin:0 0;">Iznos pret<u>p</u>oreza 13% nepriznati:</div>
<div class="r" style="left:359px;top:321px;width:34px;height:12px;background:#ffffff;border:1px solid #a9abae;border-radius:2px;border-top-color:#babcbf;border-bottom:1.6px solid #a2a4a7;"></div>
<div class="t p" style="right:611.0px;top:322.6px;font-size:7.5px;font-weight:bold;font-style:normal;color:#111;transform:scaleX(0.82);transform-origin:100% 0;">13,00%</div>
<div class="r" style="left:393px;top:321px;width:56px;height:12px;background:#ffffff;border:1px solid #a9abae;border-radius:2px;border-top-color:#babcbf;border-bottom:1.6px solid #a2a4a7;"></div>
<div class="t p" style="right:555.0px;top:322.6px;font-size:7.5px;font-weight:bold;font-style:normal;color:#111;transform:scaleX(0.82);transform-origin:100% 0;">0,00</div>
<div class="t p" style="left:235.5px;top:336.2px;font-size:7.5px;font-weight:bold;font-style:normal;color:#111;transform:scaleX(0.82);transform-origin:0 0;">Iznos pret<u>p</u>oreza 5% priznati:</div>
<div class="r" style="left:359px;top:334px;width:34px;height:13px;background:#ffffff;border:1px solid #a9abae;border-radius:2px;border-top-color:#babcbf;border-bottom:1.6px solid #a2a4a7;"></div>
<div class="t p" style="right:611.0px;top:336.2px;font-size:7.5px;font-weight:bold;font-style:normal;color:#111;transform:scaleX(0.82);transform-origin:100% 0;">5,00%</div>
<div class="r" style="left:393px;top:334px;width:56px;height:13px;background:#ffffff;border:1px solid #a9abae;border-radius:2px;border-top-color:#babcbf;border-bottom:1.6px solid #a2a4a7;"></div>
<div class="t p" style="right:555.0px;top:336.2px;font-size:7.5px;font-weight:bold;font-style:normal;color:#111;transform:scaleX(0.82);transform-origin:100% 0;">0,00</div>
<div class="t p" style="left:235.5px;top:349.8px;font-size:7.5px;font-weight:bold;font-style:normal;color:#111;transform:scaleX(0.82);transform-origin:0 0;">Iznos pret<u>p</u>oreza 5% nepriznati:</div>
<div class="r" style="left:359px;top:348px;width:34px;height:13px;background:#ffffff;border:1px solid #a9abae;border-radius:2px;border-top-color:#babcbf;border-bottom:1.6px solid #a2a4a7;"></div>
<div class="t p" style="right:611.0px;top:349.8px;font-size:7.5px;font-weight:bold;font-style:normal;color:#111;transform:scaleX(0.82);transform-origin:100% 0;">5,00%</div>
<div class="r" style="left:393px;top:348px;width:56px;height:13px;background:#ffffff;border:1px solid #a9abae;border-radius:2px;border-top-color:#babcbf;border-bottom:1.6px solid #a2a4a7;"></div>
<div class="t p" style="right:555.0px;top:349.8px;font-size:7.5px;font-weight:bold;font-style:normal;color:#111;transform:scaleX(0.82);transform-origin:100% 0;">0,00</div>
<div class="t p" style="left:235.5px;top:363.4px;font-size:7.5px;font-weight:bold;font-style:normal;color:#111;transform:scaleX(0.82);transform-origin:0 0;">Post. prijenosa neopor. os. u priz. izdatak KPI:</div>
<div class="r" style="left:415px;top:362px;width:34px;height:12px;background:#ffffff;border:1px solid #a9abae;border-radius:2px;border-top-color:#babcbf;border-bottom:1.6px solid #a2a4a7;"></div>
<div class="t p" style="right:555.0px;top:363.4px;font-size:7.5px;font-weight:bold;font-style:normal;color:#111;transform:scaleX(0.82);transform-origin:100% 0;">100%</div>
<div class="t p" style="left:235.5px;top:390.7px;font-size:7.5px;font-weight:bold;font-style:normal;color:#111;transform:scaleX(0.82);transform-origin:0 0;">UKUPAN IZNOS RAČUNA:</div>
<div class="r" style="left:394px;top:389px;width:55px;height:13px;background:#e2e3e6;border:1px solid #aeb0b3;border-top-color:#f1f2f4;border-bottom:1.6px solid #a6a8ab;"></div>
<div class="t p" style="right:555.0px;top:390.7px;font-size:7.5px;font-weight:bold;font-style:normal;color:#2a2a2a;transform:scaleX(0.82);transform-origin:100% 0;">37,50</div>
<div class="r" style="left:7px;top:510px;width:44px;height:15px;background:#0a8a3d;"></div>
<div class="t p" style="left:-171.2px;width:400px;text-align:center;top:513.2px;font-size:7.5px;font-weight:bold;font-style:normal;color:#fff;transform:scaleX(0.8);transform-origin:50% 0;">OK</div>
<div class="r" style="left:56px;top:510px;width:64px;height:15px;background:#d6d7da;"></div>
<div class="t p" style="left:-112.2px;width:400px;text-align:center;top:513.2px;font-size:7.5px;font-weight:bold;font-style:normal;color:#111;transform:scaleX(0.82);transform-origin:50% 0;">F2 - eRačun podaci</div>
<div class="r" style="left:900px;top:510px;width:45px;height:15px;background:#d6d7da;"></div>
<div class="t p" style="left:722.2px;width:400px;text-align:center;top:513.2px;font-size:7.5px;font-weight:bold;font-style:normal;color:#111;transform:scaleX(0.82);transform-origin:50% 0;">Upute</div>
<div class="r" style="left:949px;top:510px;width:45px;height:15px;background:#d6d7da;"></div>
<div class="t p" style="left:771.5px;width:400px;text-align:center;top:513.2px;font-size:7.5px;font-weight:bold;font-style:normal;color:#111;transform:scaleX(0.82);transform-origin:50% 0;">Prekid</div>
<div class="r" style="left:0px;top:529px;width:1000px;height:13px;background:#f0f0f0;border-top:1px solid #a9acaf;"></div>
<div class="r" style="left:5px;top:532px;width:446px;height:10px;background:#f0f0f0;border:1px solid #d0d0d0;border-right-color:#fafafa;border-bottom-color:#fafafa;"></div>
<div class="r" style="left:455px;top:532px;width:540px;height:10px;background:#f0f0f0;border-top:1px solid #bdbdbd;border-left:1px solid #b0b0b0;border-right:1px solid #fafafa;"></div>
<div class="t " style="left:457.0px;top:532.5px;font-size:7px;font-weight:normal;font-style:normal;color:#1a1a1a;transform:scaleX(0.875);transform-origin:0 0;">Ctrl+Kotačić miša za povećavanje/smanjivanje; Desna tipka miša za izbor drugog priloga; Ctrl+C za kopiranje</div>
<div class="r" style="left:458px;top:42px;width:1px;height:464px;background:#d0d2d4;"></div>
<div class="r" style="left:459px;top:42px;width:535px;height:464px;background:#373a3e;"></div>
<div class="r" style="left:463px;top:44px;width:528px;height:462px;background:#ffffff;"></div>
<div class="r" style="left:994px;top:42px;width:6px;height:464px;background:#f0f0f0;"></div>
<div class="r" style="left:996px;top:51px;width:4px;height:273px;background:#c2c3c5;"></div>
<svg class="r" style="left:996px;top:44px" width="4" height="6"><path d="M0.5 4 L2 2.5 L3.5 4" stroke="#555" stroke-width="0.8" fill="none"/></svg>
<svg class="r" style="left:995px;top:497px" width="5" height="6"><path d="M1 2 L2.5 4 L4 2 Z" fill="#333"/></svg>
<div class="t " style="left:754.8px;top:61.4px;font-size:8.85px;font-weight:bold;font-style:normal;color:#000;transform:scaleX(1);transform-origin:0 0;">!! DEMO 4th Dimension d.o.o. DEMO !!</div>
<div class="t " style="left:754.8px;top:71.6px;font-size:8.85px;font-weight:normal;font-style:normal;color:#000;transform:scaleX(1);transform-origin:0 0;">proizvodnja software-a</div>
<div class="t " style="left:754.8px;top:81.8px;font-size:8.85px;font-weight:normal;font-style:normal;color:#000;transform:scaleX(1);transform-origin:0 0;">Dane Duića 5</div>
<div class="t " style="left:754.8px;top:92.0px;font-size:8.85px;font-weight:normal;font-style:normal;color:#000;transform:scaleX(1);transform-origin:0 0;">10000 Zagreb</div>
<div class="t " style="left:754.8px;top:102.2px;font-size:8.85px;font-weight:normal;font-style:normal;color:#000;transform:scaleX(1);transform-origin:0 0;">Tel:</div>
<div class="t " style="left:799.0px;top:102.2px;font-size:8.85px;font-weight:normal;font-style:normal;color:#000;transform:scaleX(1);transform-origin:0 0;">(+385 1) 6312-600</div>
<div class="t " style="left:754.8px;top:112.4px;font-size:8.85px;font-weight:normal;font-style:normal;color:#000;transform:scaleX(1);transform-origin:0 0;">Fax:</div>
<div class="t " style="left:799.0px;top:112.4px;font-size:8.85px;font-weight:normal;font-style:normal;color:#000;transform:scaleX(1);transform-origin:0 0;">(+385 1) 6312-610</div>
<div class="t " style="left:754.8px;top:122.6px;font-size:8.85px;font-weight:normal;font-style:normal;color:#000;transform:scaleX(1);transform-origin:0 0;">Račun(i):</div>
<div class="t " style="left:799.0px;top:122.6px;font-size:8.85px;font-weight:normal;font-style:normal;color:#000;transform:scaleX(1);transform-origin:0 0;">HR3624840081100204353</div>
<div class="t " style="left:799.0px;top:132.8px;font-size:8.85px;font-weight:normal;font-style:normal;color:#000;transform:scaleX(1);transform-origin:0 0;">HR8424800001165445656</div>
<div class="t " style="left:799.0px;top:143.0px;font-size:8.85px;font-weight:normal;font-style:normal;color:#000;transform:scaleX(1);transform-origin:0 0;">248000-46543213211</div>
<div class="t " style="left:799.0px;top:153.2px;font-size:8.85px;font-weight:normal;font-style:normal;color:#000;transform:scaleX(1);transform-origin:0 0;">HR8424800001165445656</div>
<div class="t " style="left:754.8px;top:163.4px;font-size:8.85px;font-weight:normal;font-style:normal;color:#000;transform:scaleX(1);transform-origin:0 0;">OIB:</div>
<div class="t " style="left:799.0px;top:163.4px;font-size:8.85px;font-weight:normal;font-style:normal;color:#000;transform:scaleX(1);transform-origin:0 0;">20706921230</div>
<div class="t " style="left:754.8px;top:173.6px;font-size:8.85px;font-weight:normal;font-style:normal;color:#000;transform:scaleX(1);transform-origin:0 0;">eMail:</div>
<div class="t " style="left:799.0px;top:173.6px;font-size:8.85px;font-weight:normal;font-style:normal;color:#000;transform:scaleX(1);transform-origin:0 0;">4d@4d.hr;luka.mihic@4d.hr</div>
<div class="t " style="left:754.8px;top:183.8px;font-size:8.85px;font-weight:normal;font-style:normal;color:#000;transform:scaleX(1);transform-origin:0 0;">www:</div>
<div class="t " style="left:799.0px;top:183.8px;font-size:8.85px;font-weight:normal;font-style:normal;color:#000;transform:scaleX(1);transform-origin:0 0;">www.4d.hr</div>
<div class="t " style="left:489.0px;top:168.1px;font-size:17.6px;font-weight:bold;font-style:normal;color:#000;transform:scaleX(1);transform-origin:0 0;">Račun broj: DEMO 7-01-91</div>
<div class="r" style="left:486px;top:205px;width:254px;height:106px;background:#f2f2f2;"></div>
<div class="t " style="left:492.8px;top:210.0px;font-size:8px;font-weight:normal;font-style:normal;color:#000;transform:scaleX(1);transform-origin:0 0;">Datum izdavanja računa:</div>
<div class="t " style="left:594.5px;top:210.0px;font-size:8px;font-weight:bold;font-style:normal;color:#000;transform:scaleX(1);transform-origin:0 0;">14.01.2026</div>
<div class="t " style="left:492.8px;top:219.0px;font-size:8px;font-weight:normal;font-style:normal;color:#000;transform:scaleX(1);transform-origin:0 0;">Obrada dokumenta:</div>
<div class="t " style="left:594.5px;top:219.0px;font-size:8px;font-weight:bold;font-style:normal;color:#000;transform:scaleX(1);transform-origin:0 0;">1</div>
<div class="t " style="left:492.8px;top:228.1px;font-size:8px;font-weight:normal;font-style:normal;color:#000;transform:scaleX(1);transform-origin:0 0;">Način otpreme:</div>
<div class="t " style="left:594.5px;top:228.1px;font-size:8px;font-weight:bold;font-style:normal;color:#000;transform:scaleX(1);transform-origin:0 0;">-</div>
<div class="t " style="left:492.8px;top:237.1px;font-size:8px;font-weight:normal;font-style:normal;color:#000;transform:scaleX(1);transform-origin:0 0;">Mjesto izdavanja:</div>
<div class="t " style="left:492.8px;top:246.2px;font-size:8px;font-weight:normal;font-style:normal;color:#000;transform:scaleX(1);transform-origin:0 0;">Sredstvo plaćanja:</div>
<div class="t " style="left:594.5px;top:246.2px;font-size:8px;font-weight:bold;font-style:normal;color:#000;transform:scaleX(1);transform-origin:0 0;">Virman - Valuta: 03.02.2026</div>
<div class="t " style="left:492.8px;top:255.2px;font-size:8px;font-weight:normal;font-style:normal;color:#000;transform:scaleX(1);transform-origin:0 0;">Poziv na broj:</div>
<div class="t " style="left:594.5px;top:255.2px;font-size:8px;font-weight:bold;font-style:normal;color:#000;transform:scaleX(1);transform-origin:0 0;">440916-100518</div>
<div class="t " style="left:492.8px;top:264.3px;font-size:8px;font-weight:normal;font-style:normal;color:#000;transform:scaleX(1);transform-origin:0 0;">Otpremnica:</div>
<div class="t " style="left:594.5px;top:264.3px;font-size:8px;font-weight:bold;font-style:normal;color:#000;transform:scaleX(1);transform-origin:0 0;">6</div>
<div class="t " style="left:492.8px;top:273.3px;font-size:8px;font-weight:normal;font-style:normal;color:#000;transform:scaleX(1);transform-origin:0 0;">Datum otpreme/usluge:</div>
<div class="t " style="left:594.5px;top:273.3px;font-size:8px;font-weight:bold;font-style:normal;color:#000;transform:scaleX(1);transform-origin:0 0;">14.01.2026</div>
<div class="t " style="left:492.8px;top:282.4px;font-size:8px;font-weight:normal;font-style:normal;color:#000;transform:scaleX(1);transform-origin:0 0;">Oznaka procesa:</div>
<div class="t " style="left:594.5px;top:282.4px;font-size:8px;font-weight:bold;font-style:normal;color:#000;transform:scaleX(1);transform-origin:0 0;">P3 Fakturiranje isporuka preko</div>
<div class="t " style="left:594.5px;top:291.4px;font-size:8px;font-weight:bold;font-style:normal;color:#000;transform:scaleX(1);transform-origin:0 0;">nepredviđene narudžbe</div>
<div class="r" style="left:752px;top:205px;width:219px;height:106px;background:#f2f2f2;"></div>
<div class="t " style="left:759.5px;top:209.3px;font-size:8px;font-weight:normal;font-style:normal;color:#000;transform:scaleX(1);transform-origin:0 0;">Kupac:</div>
<div class="t" style="left:759.5px;top:218.3px;font-size:8px;color:#000">OIB: <b>86255713939</b></div>
<div class="t " style="left:759.5px;top:237.3px;font-size:8px;font-weight:bold;font-style:normal;color:#000;transform:scaleX(1);transform-origin:0 0;">ŽIVA VODA D.O.O.</div>
<div class="t " style="left:759.5px;top:246.4px;font-size:8px;font-weight:bold;font-style:normal;color:#000;transform:scaleX(1);transform-origin:0 0;">VRTNI PUT 3</div>
<div class="t " style="left:759.5px;top:255.5px;font-size:8px;font-weight:bold;font-style:normal;color:#000;transform:scaleX(1);transform-origin:0 0;">10000 Zagreb</div>
<div class="r" style="left:485px;top:319px;width:486px;height:17px;background:#f2f2f2;"></div>
<div class="r" style="left:485px;top:335px;width:486px;height:2px;background:#666;"></div>
<div class="r" style="left:485px;top:344px;width:486px;height:2px;background:#666;"></div>
<div class="r" style="left:485px;top:346px;width:486px;height:8px;background:#f2f2f2;"></div>
<div class="t " style="left:490.8px;top:319.7px;font-size:7.15px;font-weight:normal;font-style:normal;color:#000;transform:scaleX(1);transform-origin:0 0;">R.</div>
<div class="t " style="left:489.8px;top:327.7px;font-size:7.15px;font-weight:normal;font-style:normal;color:#000;transform:scaleX(1);transform-origin:0 0;">br.</div>
<div class="t " style="left:505.0px;top:319.7px;font-size:7.15px;font-weight:normal;font-style:normal;color:#000;transform:scaleX(1);transform-origin:0 0;">Kataloški broj</div>
<div class="t " style="left:565.8px;top:319.7px;font-size:7.15px;font-weight:normal;font-style:normal;color:#000;transform:scaleX(1);transform-origin:0 0;">Naziv artikla / usluge</div>
<div class="t " style="right:284.0px;top:319.7px;font-size:7.15px;font-weight:normal;font-style:normal;color:#000;transform:scaleX(1);transform-origin:100% 0;">Jed.</div>
<div class="t " style="right:286.0px;top:327.7px;font-size:7.15px;font-weight:normal;font-style:normal;color:#000;transform:scaleX(1);transform-origin:100% 0;">mj.</div>
<div class="t " style="right:243.0px;top:319.7px;font-size:7.15px;font-weight:normal;font-style:normal;color:#000;transform:scaleX(1);transform-origin:100% 0;">Količina</div>
<div class="t " style="right:223.0px;top:319.7px;font-size:7.15px;font-weight:normal;font-style:normal;color:#000;transform:scaleX(1);transform-origin:100% 0;">PDV</div>
<div class="t " style="right:223.0px;top:327.7px;font-size:7.15px;font-weight:normal;font-style:normal;color:#000;transform:scaleX(1);transform-origin:100% 0;">%</div>
<div class="t " style="right:172.7px;top:319.7px;font-size:7.15px;font-weight:normal;font-style:normal;color:#000;transform:scaleX(1);transform-origin:100% 0;">Cijena</div>
<div class="t " style="right:122.0px;top:319.7px;font-size:7.15px;font-weight:normal;font-style:normal;color:#000;transform:scaleX(1);transform-origin:100% 0;">Iznos</div>
<div class="t " style="right:82.0px;top:319.7px;font-size:7.15px;font-weight:normal;font-style:normal;color:#000;transform:scaleX(1);transform-origin:100% 0;">Iznos</div>
<div class="t " style="right:82.0px;top:327.7px;font-size:7.15px;font-weight:normal;font-style:normal;color:#000;transform:scaleX(1);transform-origin:100% 0;">rabata</div>
<div class="t " style="right:31.0px;top:319.7px;font-size:7.15px;font-weight:normal;font-style:normal;color:#000;transform:scaleX(1);transform-origin:100% 0;">Iznos</div>
<div class="t " style="right:31.0px;top:327.7px;font-size:7.15px;font-weight:normal;font-style:normal;color:#000;transform:scaleX(1);transform-origin:100% 0;">stavke</div>
<div class="t " style="right:500.8px;top:336.9px;font-size:7.15px;font-weight:normal;font-style:normal;color:#000;transform:scaleX(1);transform-origin:100% 0;">1</div>
<div class="t " style="left:565.8px;top:336.9px;font-size:7.15px;font-weight:normal;font-style:normal;color:#000;transform:scaleX(1);transform-origin:0 0;">Usluga krojenja</div>
<div class="t " style="left:702.0px;top:336.9px;font-size:7.15px;font-weight:normal;font-style:normal;color:#000;transform:scaleX(1);transform-origin:0 0;">sat</div>
<div class="t " style="right:243.0px;top:336.9px;font-size:7.15px;font-weight:normal;font-style:normal;color:#000;transform:scaleX(1);transform-origin:100% 0;">1,000</div>
<div class="t " style="right:223.0px;top:336.9px;font-size:7.15px;font-weight:normal;font-style:normal;color:#000;transform:scaleX(1);transform-origin:100% 0;">25,0</div>
<div class="t " style="right:172.7px;top:336.9px;font-size:7.15px;font-weight:normal;font-style:normal;color:#000;transform:scaleX(1);transform-origin:100% 0;">30,00</div>
<div class="t " style="right:122.0px;top:336.9px;font-size:7.15px;font-weight:normal;font-style:normal;color:#000;transform:scaleX(1);transform-origin:100% 0;">30,00</div>
<div class="t " style="right:31.0px;top:336.9px;font-size:7.15px;font-weight:normal;font-style:normal;color:#000;transform:scaleX(1);transform-origin:100% 0;">30,00</div>
<div class="t " style="left:565.8px;top:345.9px;font-size:7.15px;font-weight:bold;font-style:normal;color:#000;transform:scaleX(1);transform-origin:0 0;">Ukupno prije poreza:</div>
<div class="t " style="right:122.0px;top:345.9px;font-size:7.15px;font-weight:bold;font-style:normal;color:#000;transform:scaleX(1);transform-origin:100% 0;">30,00</div>
<div class="t " style="right:31.0px;top:345.9px;font-size:7.15px;font-weight:bold;font-style:normal;color:#000;transform:scaleX(1);transform-origin:100% 0;">30,00</div>
<svg class="r" style="left:496px;top:362.3px" width="112" height="41.7"><rect x="0" y="0" width="3.6" height="41.7" fill="#000"/><rect x="4.6" y="0" width="0.8" height="41.7" fill="#000"/><rect x="6.2" y="0" width="0.8" height="41.7" fill="#000"/><rect x="7.6" y="0" width="0.8" height="41.7" fill="#000"/><rect x="104.3" y="0" width="3.2" height="41.7" fill="#000"/><rect x="108.3" y="0" width="0.8" height="41.7" fill="#000"/><rect x="110.2" y="0" width="1" height="41.7" fill="#000"/><path d="M9.50 0.00h1.71v1.90h-1.71zM12.06 0.00h8.55v1.90h-8.55zM21.46 0.00h1.71v1.90h-1.71zM24.88 0.00h1.71v1.90h-1.71zM27.45 0.00h0.85v1.90h-0.85zM29.15 0.00h3.42v1.90h-3.42zM33.43 0.00h1.71v1.90h-1.71zM35.99 0.00h4.27v1.90h-4.27zM41.12 0.00h4.27v1.90h-4.27zM47.10 0.00h2.56v1.90h-2.56zM51.37 0.00h0.85v1.90h-0.85zM53.08 0.00h1.71v1.90h-1.71zM55.65 0.00h2.56v1.90h-2.56zM59.92 0.00h0.85v1.90h-0.85zM61.63 0.00h0.85v1.90h-0.85zM63.34 0.00h2.56v1.90h-2.56zM67.61 0.00h0.85v1.90h-0.85zM69.32 0.00h0.85v1.90h-0.85zM73.59 0.00h1.71v1.90h-1.71zM76.15 0.00h4.27v1.90h-4.27zM81.28 0.00h2.56v1.90h-2.56zM84.70 0.00h2.56v1.90h-2.56zM89.83 0.00h2.56v1.90h-2.56zM94.10 0.00h9.40v1.90h-9.40zM11.21 1.90h0.85v1.90h-0.85zM13.77 1.90h0.85v1.90h-0.85zM18.05 1.90h2.56v1.90h-2.56zM21.46 1.90h9.40v1.90h-9.40zM32.57 1.90h4.27v1.90h-4.27zM38.55 1.90h5.13v1.90h-5.13zM44.54 1.90h1.71v1.90h-1.71zM47.10 1.90h4.27v1.90h-4.27zM53.94 1.90h2.56v1.90h-2.56zM57.35 1.90h0.85v1.90h-0.85zM59.06 1.90h1.71v1.90h-1.71zM65.90 1.90h5.98v1.90h-5.98zM73.59 1.90h0.85v1.90h-0.85zM77.01 1.90h4.27v1.90h-4.27zM83.85 1.90h0.85v1.90h-0.85zM86.41 1.90h0.85v1.90h-0.85zM90.68 1.90h1.71v1.90h-1.71zM93.25 1.90h0.85v1.90h-0.85zM95.81 1.90h1.71v1.90h-1.71zM99.23 1.90h2.56v1.90h-2.56zM9.50 3.79h0.85v1.90h-0.85zM12.92 3.79h3.42v1.90h-3.42zM18.05 3.79h0.85v1.90h-0.85zM19.75 3.79h0.85v1.90h-0.85zM22.32 3.79h6.84v1.90h-6.84zM30.01 3.79h2.56v1.90h-2.56zM33.43 3.79h0.85v1.90h-0.85zM35.14 3.79h5.98v1.90h-5.98zM41.97 3.79h1.71v1.90h-1.71zM44.54 3.79h3.42v1.90h-3.42zM48.81 3.79h3.42v1.90h-3.42zM53.08 3.79h1.71v1.90h-1.71zM56.50 3.79h0.85v1.90h-0.85zM58.21 3.79h1.71v1.90h-1.71zM60.77 3.79h2.56v1.90h-2.56zM66.75 3.79h1.71v1.90h-1.71zM70.17 3.79h5.13v1.90h-5.13zM77.86 3.79h0.85v1.90h-0.85zM80.43 3.79h0.85v1.90h-0.85zM82.99 3.79h0.85v1.90h-0.85zM84.70 3.79h1.71v1.90h-1.71zM88.12 3.79h5.13v1.90h-5.13zM94.10 3.79h4.27v1.90h-4.27zM99.23 3.79h1.71v1.90h-1.71zM9.50 5.69h2.56v1.90h-2.56zM12.92 5.69h2.56v1.90h-2.56zM17.19 5.69h1.71v1.90h-1.71zM19.75 5.69h0.85v1.90h-0.85zM21.46 5.69h1.71v1.90h-1.71zM24.03 5.69h1.71v1.90h-1.71zM28.30 5.69h0.85v1.90h-0.85zM30.01 5.69h0.85v1.90h-0.85zM31.72 5.69h2.56v1.90h-2.56zM35.14 5.69h8.55v1.90h-8.55zM44.54 5.69h5.98v1.90h-5.98zM51.37 5.69h2.56v1.90h-2.56zM54.79 5.69h0.85v1.90h-0.85zM56.50 5.69h1.71v1.90h-1.71zM59.06 5.69h1.71v1.90h-1.71zM62.48 5.69h0.85v1.90h-0.85zM65.90 5.69h4.27v1.90h-4.27zM71.03 5.69h2.56v1.90h-2.56zM76.15 5.69h5.98v1.90h-5.98zM83.85 5.69h1.71v1.90h-1.71zM86.41 5.69h15.38v1.90h-15.38zM11.21 7.58h1.71v1.90h-1.71zM13.77 7.58h0.85v1.90h-0.85zM16.34 7.58h0.85v1.90h-0.85zM21.46 7.58h2.56v1.90h-2.56zM26.59 7.58h0.85v1.90h-0.85zM30.01 7.58h4.27v1.90h-4.27zM35.14 7.58h0.85v1.90h-0.85zM38.55 7.58h1.71v1.90h-1.71zM41.97 7.58h1.71v1.90h-1.71zM44.54 7.58h0.85v1.90h-0.85zM46.25 7.58h2.56v1.90h-2.56zM49.66 7.58h0.85v1.90h-0.85zM52.23 7.58h2.56v1.90h-2.56zM58.21 7.58h2.56v1.90h-2.56zM61.63 7.58h4.27v1.90h-4.27zM68.46 7.58h4.27v1.90h-4.27zM73.59 7.58h0.85v1.90h-0.85zM76.15 7.58h1.71v1.90h-1.71zM79.57 7.58h2.56v1.90h-2.56zM82.99 7.58h3.42v1.90h-3.42zM87.26 7.58h0.85v1.90h-0.85zM88.97 7.58h0.85v1.90h-0.85zM91.54 7.58h0.85v1.90h-0.85zM93.25 7.58h7.69v1.90h-7.69zM101.79 7.58h0.85v1.90h-0.85zM10.35 9.48h0.85v1.90h-0.85zM13.77 9.48h2.56v1.90h-2.56zM17.19 9.48h5.13v1.90h-5.13zM23.17 9.48h0.85v1.90h-0.85zM24.88 9.48h4.27v1.90h-4.27zM34.28 9.48h0.85v1.90h-0.85zM35.99 9.48h0.85v1.90h-0.85zM37.70 9.48h0.85v1.90h-0.85zM40.26 9.48h1.71v1.90h-1.71zM42.83 9.48h3.42v1.90h-3.42zM47.95 9.48h0.85v1.90h-0.85zM49.66 9.48h5.13v1.90h-5.13zM55.65 9.48h1.71v1.90h-1.71zM59.06 9.48h7.69v1.90h-7.69zM68.46 9.48h5.98v1.90h-5.98zM75.30 9.48h1.71v1.90h-1.71zM78.72 9.48h4.27v1.90h-4.27zM85.55 9.48h1.71v1.90h-1.71zM88.97 9.48h3.42v1.90h-3.42zM95.81 9.48h3.42v1.90h-3.42zM9.50 11.37h2.56v1.90h-2.56zM12.92 11.37h0.85v1.90h-0.85zM15.48 11.37h2.56v1.90h-2.56zM19.75 11.37h5.13v1.90h-5.13zM25.74 11.37h2.56v1.90h-2.56zM30.86 11.37h2.56v1.90h-2.56zM35.14 11.37h2.56v1.90h-2.56zM38.55 11.37h1.71v1.90h-1.71zM41.97 11.37h3.42v1.90h-3.42zM46.25 11.37h0.85v1.90h-0.85zM48.81 11.37h1.71v1.90h-1.71zM51.37 11.37h0.85v1.90h-0.85zM53.08 11.37h1.71v1.90h-1.71zM55.65 11.37h0.85v1.90h-0.85zM57.35 11.37h3.42v1.90h-3.42zM62.48 11.37h2.56v1.90h-2.56zM65.90 11.37h3.42v1.90h-3.42zM73.59 11.37h1.71v1.90h-1.71zM77.01 11.37h0.85v1.90h-0.85zM78.72 11.37h5.98v1.90h-5.98zM85.55 11.37h0.85v1.90h-0.85zM87.26 11.37h1.71v1.90h-1.71zM90.68 11.37h3.42v1.90h-3.42zM94.95 11.37h1.71v1.90h-1.71zM97.52 11.37h1.71v1.90h-1.71zM100.94 11.37h2.56v1.90h-2.56zM10.35 13.27h0.85v1.90h-0.85zM12.92 13.27h1.71v1.90h-1.71zM16.34 13.27h0.85v1.90h-0.85zM18.05 13.27h2.56v1.90h-2.56zM24.03 13.27h2.56v1.90h-2.56zM28.30 13.27h3.42v1.90h-3.42zM32.57 13.27h0.85v1.90h-0.85zM37.70 13.27h2.56v1.90h-2.56zM41.12 13.27h1.71v1.90h-1.71zM43.68 13.27h4.27v1.90h-4.27zM50.52 13.27h3.42v1.90h-3.42zM54.79 13.27h2.56v1.90h-2.56zM61.63 13.27h0.85v1.90h-0.85zM63.34 13.27h2.56v1.90h-2.56zM66.75 13.27h3.42v1.90h-3.42zM71.03 13.27h2.56v1.90h-2.56zM74.45 13.27h1.71v1.90h-1.71zM78.72 13.27h1.71v1.90h-1.71zM82.99 13.27h3.42v1.90h-3.42zM87.26 13.27h0.85v1.90h-0.85zM88.97 13.27h0.85v1.90h-0.85zM90.68 13.27h1.71v1.90h-1.71zM94.10 13.27h1.71v1.90h-1.71zM96.66 13.27h5.13v1.90h-5.13zM102.65 13.27h0.85v1.90h-0.85zM9.50 15.16h1.71v1.90h-1.71zM12.06 15.16h2.56v1.90h-2.56zM15.48 15.16h4.27v1.90h-4.27zM20.61 15.16h1.71v1.90h-1.71zM23.17 15.16h2.56v1.90h-2.56zM26.59 15.16h3.42v1.90h-3.42zM31.72 15.16h1.71v1.90h-1.71zM34.28 15.16h1.71v1.90h-1.71zM36.85 15.16h0.85v1.90h-0.85zM38.55 15.16h0.85v1.90h-0.85zM40.26 15.16h3.42v1.90h-3.42zM45.39 15.16h0.85v1.90h-0.85zM47.10 15.16h4.27v1.90h-4.27zM52.23 15.16h1.71v1.90h-1.71zM55.65 15.16h1.71v1.90h-1.71zM59.06 15.16h1.71v1.90h-1.71zM61.63 15.16h0.85v1.90h-0.85zM65.05 15.16h0.85v1.90h-0.85zM66.75 15.16h1.71v1.90h-1.71zM70.17 15.16h5.98v1.90h-5.98zM77.86 15.16h1.71v1.90h-1.71zM80.43 15.16h0.85v1.90h-0.85zM82.14 15.16h2.56v1.90h-2.56zM85.55 15.16h3.42v1.90h-3.42zM89.83 15.16h2.56v1.90h-2.56zM93.25 15.16h1.71v1.90h-1.71zM96.66 15.16h6.84v1.90h-6.84zM9.50 17.06h1.71v1.90h-1.71zM12.06 17.06h0.85v1.90h-0.85zM14.63 17.06h3.42v1.90h-3.42zM18.90 17.06h0.85v1.90h-0.85zM23.17 17.06h0.85v1.90h-0.85zM24.88 17.06h0.85v1.90h-0.85zM27.45 17.06h0.85v1.90h-0.85zM30.01 17.06h1.71v1.90h-1.71zM32.57 17.06h0.85v1.90h-0.85zM34.28 17.06h0.85v1.90h-0.85zM35.99 17.06h1.71v1.90h-1.71zM38.55 17.06h5.98v1.90h-5.98zM47.10 17.06h0.85v1.90h-0.85zM48.81 17.06h1.71v1.90h-1.71zM51.37 17.06h0.85v1.90h-0.85zM53.08 17.06h1.71v1.90h-1.71zM55.65 17.06h0.85v1.90h-0.85zM58.21 17.06h0.85v1.90h-0.85zM59.92 17.06h0.85v1.90h-0.85zM61.63 17.06h1.71v1.90h-1.71zM64.19 17.06h1.71v1.90h-1.71zM66.75 17.06h0.85v1.90h-0.85zM68.46 17.06h0.85v1.90h-0.85zM71.03 17.06h0.85v1.90h-0.85zM72.74 17.06h3.42v1.90h-3.42zM77.01 17.06h1.71v1.90h-1.71zM79.57 17.06h1.71v1.90h-1.71zM82.14 17.06h7.69v1.90h-7.69zM90.68 17.06h1.71v1.90h-1.71zM93.25 17.06h2.56v1.90h-2.56zM98.37 17.06h2.56v1.90h-2.56zM101.79 17.06h1.71v1.90h-1.71zM10.35 18.95h0.85v1.90h-0.85zM12.92 18.95h0.85v1.90h-0.85zM14.63 18.95h4.27v1.90h-4.27zM19.75 18.95h1.71v1.90h-1.71zM22.32 18.95h1.71v1.90h-1.71zM24.88 18.95h0.85v1.90h-0.85zM27.45 18.95h3.42v1.90h-3.42zM33.43 18.95h0.85v1.90h-0.85zM35.99 18.95h0.85v1.90h-0.85zM37.70 18.95h5.13v1.90h-5.13zM46.25 18.95h2.56v1.90h-2.56zM49.66 18.95h1.71v1.90h-1.71zM53.08 18.95h0.85v1.90h-0.85zM54.79 18.95h2.56v1.90h-2.56zM59.92 18.95h0.85v1.90h-0.85zM61.63 18.95h1.71v1.90h-1.71zM67.61 18.95h0.85v1.90h-0.85zM71.03 18.95h0.85v1.90h-0.85zM72.74 18.95h2.56v1.90h-2.56zM76.15 18.95h0.85v1.90h-0.85zM77.86 18.95h2.56v1.90h-2.56zM81.28 18.95h3.42v1.90h-3.42zM88.12 18.95h2.56v1.90h-2.56zM93.25 18.95h0.85v1.90h-0.85zM96.66 18.95h3.42v1.90h-3.42zM10.35 20.85h2.56v1.90h-2.56zM13.77 20.85h5.13v1.90h-5.13zM19.75 20.85h1.71v1.90h-1.71zM22.32 20.85h0.85v1.90h-0.85zM24.88 20.85h2.56v1.90h-2.56zM28.30 20.85h0.85v1.90h-0.85zM30.01 20.85h1.71v1.90h-1.71zM32.57 20.85h0.85v1.90h-0.85zM34.28 20.85h2.56v1.90h-2.56zM38.55 20.85h2.56v1.90h-2.56zM41.97 20.85h2.56v1.90h-2.56zM45.39 20.85h0.85v1.90h-0.85zM47.10 20.85h1.71v1.90h-1.71zM49.66 20.85h1.71v1.90h-1.71zM52.23 20.85h0.85v1.90h-0.85zM56.50 20.85h2.56v1.90h-2.56zM59.92 20.85h0.85v1.90h-0.85zM61.63 20.85h2.56v1.90h-2.56zM65.05 20.85h1.71v1.90h-1.71zM67.61 20.85h2.56v1.90h-2.56zM72.74 20.85h2.56v1.90h-2.56zM77.86 20.85h1.71v1.90h-1.71zM80.43 20.85h2.56v1.90h-2.56zM83.85 20.85h2.56v1.90h-2.56zM88.12 20.85h6.84v1.90h-6.84zM96.66 20.85h0.85v1.90h-0.85zM98.37 20.85h1.71v1.90h-1.71zM102.65 20.85h0.85v1.90h-0.85zM9.50 22.75h0.85v1.90h-0.85zM11.21 22.75h4.27v1.90h-4.27zM17.19 22.75h0.85v1.90h-0.85zM18.90 22.75h1.71v1.90h-1.71zM21.46 22.75h0.85v1.90h-0.85zM24.03 22.75h1.71v1.90h-1.71zM26.59 22.75h1.71v1.90h-1.71zM34.28 22.75h1.71v1.90h-1.71zM36.85 22.75h1.71v1.90h-1.71zM41.12 22.75h2.56v1.90h-2.56zM44.54 22.75h0.85v1.90h-0.85zM47.10 22.75h0.85v1.90h-0.85zM49.66 22.75h1.71v1.90h-1.71zM52.23 22.75h2.56v1.90h-2.56zM56.50 22.75h3.42v1.90h-3.42zM60.77 22.75h0.85v1.90h-0.85zM63.34 22.75h1.71v1.90h-1.71zM65.90 22.75h0.85v1.90h-0.85zM67.61 22.75h0.85v1.90h-0.85zM69.32 22.75h0.85v1.90h-0.85zM71.03 22.75h5.98v1.90h-5.98zM77.86 22.75h2.56v1.90h-2.56zM82.14 22.75h1.71v1.90h-1.71zM84.70 22.75h2.56v1.90h-2.56zM89.83 22.75h2.56v1.90h-2.56zM93.25 22.75h0.85v1.90h-0.85zM96.66 22.75h3.42v1.90h-3.42zM100.94 22.75h0.85v1.90h-0.85zM102.65 22.75h0.85v1.90h-0.85zM9.50 24.64h4.27v1.90h-4.27zM14.63 24.64h4.27v1.90h-4.27zM20.61 24.64h0.85v1.90h-0.85zM23.17 24.64h0.85v1.90h-0.85zM26.59 24.64h0.85v1.90h-0.85zM29.15 24.64h1.71v1.90h-1.71zM32.57 24.64h3.42v1.90h-3.42zM36.85 24.64h1.71v1.90h-1.71zM40.26 24.64h0.85v1.90h-0.85zM47.10 24.64h0.85v1.90h-0.85zM48.81 24.64h0.85v1.90h-0.85zM50.52 24.64h0.85v1.90h-0.85zM52.23 24.64h9.40v1.90h-9.40zM62.48 24.64h0.85v1.90h-0.85zM64.19 24.64h1.71v1.90h-1.71zM67.61 24.64h1.71v1.90h-1.71zM70.17 24.64h0.85v1.90h-0.85zM72.74 24.64h0.85v1.90h-0.85zM76.15 24.64h0.85v1.90h-0.85zM77.86 24.64h1.71v1.90h-1.71zM80.43 24.64h0.85v1.90h-0.85zM82.99 24.64h0.85v1.90h-0.85zM84.70 24.64h2.56v1.90h-2.56zM88.12 24.64h3.42v1.90h-3.42zM92.39 24.64h0.85v1.90h-0.85zM94.10 24.64h3.42v1.90h-3.42zM100.08 24.64h3.42v1.90h-3.42zM11.21 26.54h0.85v1.90h-0.85zM13.77 26.54h4.27v1.90h-4.27zM25.74 26.54h0.85v1.90h-0.85zM27.45 26.54h0.85v1.90h-0.85zM29.15 26.54h0.85v1.90h-0.85zM30.86 26.54h2.56v1.90h-2.56zM35.99 26.54h0.85v1.90h-0.85zM38.55 26.54h5.13v1.90h-5.13zM45.39 26.54h3.42v1.90h-3.42zM49.66 26.54h0.85v1.90h-0.85zM51.37 26.54h3.42v1.90h-3.42zM56.50 26.54h2.56v1.90h-2.56zM59.92 26.54h3.42v1.90h-3.42zM64.19 26.54h0.85v1.90h-0.85zM65.90 26.54h0.85v1.90h-0.85zM67.61 26.54h1.71v1.90h-1.71zM70.17 26.54h0.85v1.90h-0.85zM71.88 26.54h1.71v1.90h-1.71zM77.01 26.54h0.85v1.90h-0.85zM79.57 26.54h0.85v1.90h-0.85zM81.28 26.54h0.85v1.90h-0.85zM83.85 26.54h1.71v1.90h-1.71zM87.26 26.54h1.71v1.90h-1.71zM89.83 26.54h0.85v1.90h-0.85zM91.54 26.54h4.27v1.90h-4.27zM96.66 26.54h0.85v1.90h-0.85zM98.37 26.54h0.85v1.90h-0.85zM100.94 26.54h1.71v1.90h-1.71zM11.21 28.43h2.56v1.90h-2.56zM16.34 28.43h0.85v1.90h-0.85zM20.61 28.43h1.71v1.90h-1.71zM23.17 28.43h0.85v1.90h-0.85zM27.45 28.43h4.27v1.90h-4.27zM33.43 28.43h0.85v1.90h-0.85zM36.85 28.43h1.71v1.90h-1.71zM41.97 28.43h2.56v1.90h-2.56zM45.39 28.43h0.85v1.90h-0.85zM47.95 28.43h0.85v1.90h-0.85zM50.52 28.43h2.56v1.90h-2.56zM54.79 28.43h1.71v1.90h-1.71zM58.21 28.43h1.71v1.90h-1.71zM61.63 28.43h5.13v1.90h-5.13zM67.61 28.43h5.13v1.90h-5.13zM73.59 28.43h1.71v1.90h-1.71zM77.01 28.43h5.13v1.90h-5.13zM83.85 28.43h2.56v1.90h-2.56zM87.26 28.43h0.85v1.90h-0.85zM91.54 28.43h5.98v1.90h-5.98zM98.37 28.43h0.85v1.90h-0.85zM100.94 28.43h2.56v1.90h-2.56zM9.50 30.33h0.85v1.90h-0.85zM11.21 30.33h1.71v1.90h-1.71zM15.48 30.33h2.56v1.90h-2.56zM19.75 30.33h3.42v1.90h-3.42zM25.74 30.33h0.85v1.90h-0.85zM30.01 30.33h1.71v1.90h-1.71zM34.28 30.33h1.71v1.90h-1.71zM36.85 30.33h6.84v1.90h-6.84zM44.54 30.33h0.85v1.90h-0.85zM46.25 30.33h1.71v1.90h-1.71zM48.81 30.33h0.85v1.90h-0.85zM52.23 30.33h2.56v1.90h-2.56zM57.35 30.33h1.71v1.90h-1.71zM59.92 30.33h0.85v1.90h-0.85zM61.63 30.33h2.56v1.90h-2.56zM65.05 30.33h1.71v1.90h-1.71zM67.61 30.33h3.42v1.90h-3.42zM71.88 30.33h3.42v1.90h-3.42zM76.15 30.33h0.85v1.90h-0.85zM77.86 30.33h0.85v1.90h-0.85zM80.43 30.33h5.13v1.90h-5.13zM88.12 30.33h1.71v1.90h-1.71zM90.68 30.33h0.85v1.90h-0.85zM92.39 30.33h0.85v1.90h-0.85zM94.10 30.33h0.85v1.90h-0.85zM95.81 30.33h2.56v1.90h-2.56zM99.23 30.33h2.56v1.90h-2.56zM102.65 30.33h0.85v1.90h-0.85zM9.50 32.22h2.56v1.90h-2.56zM13.77 32.22h2.56v1.90h-2.56zM17.19 32.22h2.56v1.90h-2.56zM22.32 32.22h2.56v1.90h-2.56zM25.74 32.22h0.85v1.90h-0.85zM27.45 32.22h0.85v1.90h-0.85zM29.15 32.22h0.85v1.90h-0.85zM31.72 32.22h1.71v1.90h-1.71zM34.28 32.22h0.85v1.90h-0.85zM35.99 32.22h1.71v1.90h-1.71zM38.55 32.22h7.69v1.90h-7.69zM48.81 32.22h0.85v1.90h-0.85zM50.52 32.22h0.85v1.90h-0.85zM52.23 32.22h0.85v1.90h-0.85zM54.79 32.22h4.27v1.90h-4.27zM59.92 32.22h3.42v1.90h-3.42zM64.19 32.22h1.71v1.90h-1.71zM66.75 32.22h4.27v1.90h-4.27zM71.88 32.22h0.85v1.90h-0.85zM74.45 32.22h7.69v1.90h-7.69zM82.99 32.22h1.71v1.90h-1.71zM85.55 32.22h0.85v1.90h-0.85zM88.12 32.22h1.71v1.90h-1.71zM90.68 32.22h1.71v1.90h-1.71zM94.10 32.22h3.42v1.90h-3.42zM101.79 32.22h1.71v1.90h-1.71zM11.21 34.12h1.71v1.90h-1.71zM13.77 34.12h5.98v1.90h-5.98zM25.74 34.12h0.85v1.90h-0.85zM27.45 34.12h0.85v1.90h-0.85zM29.15 34.12h1.71v1.90h-1.71zM32.57 34.12h2.56v1.90h-2.56zM35.99 34.12h1.71v1.90h-1.71zM38.55 34.12h1.71v1.90h-1.71zM41.12 34.12h11.11v1.90h-11.11zM53.94 34.12h0.85v1.90h-0.85zM55.65 34.12h0.85v1.90h-0.85zM57.35 34.12h1.71v1.90h-1.71zM59.92 34.12h7.69v1.90h-7.69zM68.46 34.12h3.42v1.90h-3.42zM72.74 34.12h0.85v1.90h-0.85zM74.45 34.12h1.71v1.90h-1.71zM77.01 34.12h3.42v1.90h-3.42zM81.28 34.12h1.71v1.90h-1.71zM84.70 34.12h2.56v1.90h-2.56zM90.68 34.12h0.85v1.90h-0.85zM94.10 34.12h0.85v1.90h-0.85zM97.52 34.12h0.85v1.90h-0.85zM99.23 34.12h0.85v1.90h-0.85zM100.94 34.12h1.71v1.90h-1.71zM9.50 36.01h1.71v1.90h-1.71zM13.77 36.01h2.56v1.90h-2.56zM17.19 36.01h4.27v1.90h-4.27zM23.17 36.01h6.84v1.90h-6.84zM30.86 36.01h0.85v1.90h-0.85zM34.28 36.01h1.71v1.90h-1.71zM36.85 36.01h3.42v1.90h-3.42zM41.97 36.01h0.85v1.90h-0.85zM43.68 36.01h1.71v1.90h-1.71zM46.25 36.01h3.42v1.90h-3.42zM51.37 36.01h5.13v1.90h-5.13zM58.21 36.01h1.71v1.90h-1.71zM61.63 36.01h1.71v1.90h-1.71zM64.19 36.01h1.71v1.90h-1.71zM67.61 36.01h1.71v1.90h-1.71zM73.59 36.01h5.98v1.90h-5.98zM81.28 36.01h0.85v1.90h-0.85zM83.85 36.01h1.71v1.90h-1.71zM86.41 36.01h0.85v1.90h-0.85zM88.12 36.01h1.71v1.90h-1.71zM90.68 36.01h0.85v1.90h-0.85zM92.39 36.01h3.42v1.90h-3.42zM96.66 36.01h0.85v1.90h-0.85zM98.37 36.01h3.42v1.90h-3.42zM102.65 36.01h0.85v1.90h-0.85zM9.50 37.91h2.56v1.90h-2.56zM14.63 37.91h1.71v1.90h-1.71zM17.19 37.91h0.85v1.90h-0.85zM18.90 37.91h3.42v1.90h-3.42zM23.17 37.91h4.27v1.90h-4.27zM28.30 37.91h0.85v1.90h-0.85zM30.01 37.91h0.85v1.90h-0.85zM31.72 37.91h1.71v1.90h-1.71zM35.14 37.91h0.85v1.90h-0.85zM37.70 37.91h0.85v1.90h-0.85zM40.26 37.91h0.85v1.90h-0.85zM41.97 37.91h1.71v1.90h-1.71zM44.54 37.91h1.71v1.90h-1.71zM47.10 37.91h0.85v1.90h-0.85zM48.81 37.91h3.42v1.90h-3.42zM53.08 37.91h6.84v1.90h-6.84zM60.77 37.91h5.13v1.90h-5.13zM66.75 37.91h1.71v1.90h-1.71zM69.32 37.91h1.71v1.90h-1.71zM71.88 37.91h1.71v1.90h-1.71zM75.30 37.91h1.71v1.90h-1.71zM77.86 37.91h0.85v1.90h-0.85zM79.57 37.91h0.85v1.90h-0.85zM81.28 37.91h3.42v1.90h-3.42zM85.55 37.91h0.85v1.90h-0.85zM87.26 37.91h2.56v1.90h-2.56zM90.68 37.91h0.85v1.90h-0.85zM92.39 37.91h3.42v1.90h-3.42zM96.66 37.91h0.85v1.90h-0.85zM98.37 37.91h4.27v1.90h-4.27zM9.50 39.80h0.85v1.90h-0.85zM11.21 39.80h7.69v1.90h-7.69zM19.75 39.80h1.71v1.90h-1.71zM24.88 39.80h2.56v1.90h-2.56zM29.15 39.80h1.71v1.90h-1.71zM32.57 39.80h0.85v1.90h-0.85zM34.28 39.80h0.85v1.90h-0.85zM35.99 39.80h1.71v1.90h-1.71zM40.26 39.80h6.84v1.90h-6.84zM47.95 39.80h0.85v1.90h-0.85zM49.66 39.80h0.85v1.90h-0.85zM51.37 39.80h1.71v1.90h-1.71zM53.94 39.80h1.71v1.90h-1.71zM57.35 39.80h1.71v1.90h-1.71zM60.77 39.80h2.56v1.90h-2.56zM64.19 39.80h0.85v1.90h-0.85zM66.75 39.80h0.85v1.90h-0.85zM68.46 39.80h0.85v1.90h-0.85zM71.03 39.80h1.71v1.90h-1.71zM73.59 39.80h0.85v1.90h-0.85zM78.72 39.80h1.71v1.90h-1.71zM81.28 39.80h1.71v1.90h-1.71zM83.85 39.80h0.85v1.90h-0.85zM85.55 39.80h0.85v1.90h-0.85zM88.12 39.80h1.71v1.90h-1.71zM91.54 39.80h6.84v1.90h-6.84zM100.08 39.80h3.42v1.90h-3.42z" fill="#000"/></svg>
<div class="r" style="left:613px;top:362px;width:358px;height:43px;background:#f2f2f2;"></div>
<div class="t " style="left:621.2px;top:363.8px;font-size:8.85px;font-weight:normal;font-style:italic;color:#000;transform:scaleX(1);transform-origin:0 0;">Osnovica za PDV 25%:</div>
<div class="t " style="right:34.6px;top:363.8px;font-size:8.85px;font-weight:bold;font-style:italic;color:#000;transform:scaleX(1);transform-origin:100% 0;">30,00</div>
<div class="t " style="left:621.2px;top:374.0px;font-size:8.85px;font-weight:normal;font-style:italic;color:#000;transform:scaleX(1);transform-origin:0 0;">PDV 25%:</div>
<div class="t " style="right:34.6px;top:374.0px;font-size:8.85px;font-weight:bold;font-style:italic;color:#000;transform:scaleX(1);transform-origin:100% 0;">7,50</div>
<div class="t " style="left:621.2px;top:384.2px;font-size:8.85px;font-weight:normal;font-style:italic;color:#000;transform:scaleX(1);transform-origin:0 0;">Ukupno za platiti (€):</div>
<div class="t " style="right:34.6px;top:384.2px;font-size:8.85px;font-weight:bold;font-style:italic;color:#000;transform:scaleX(1);transform-origin:100% 0;">37,50</div>
<div class="t " style="left:621.2px;top:394.4px;font-size:8.85px;font-weight:normal;font-style:italic;color:#000;transform:scaleX(1);transform-origin:0 0;">Slovima:</div>
<div class="t " style="right:34.6px;top:394.4px;font-size:8.85px;font-weight:bold;font-style:italic;color:#000;transform:scaleX(1);transform-origin:100% 0;">tridesetsedam € i 50 c</div>
<div class="t " style="left:487.5px;top:421.7px;font-size:7.15px;font-weight:normal;font-style:normal;color:#000;transform:scaleX(1);transform-origin:0 0;">Mjesta isporuke:</div>
<div class="t" style="left:487.5px;top:429.9px;font-size:7.15px;color:#000"><b>OTP: 6</b>, <b>A centrala</b>, Adresa centrale 15, 10000 Zagreb, HRVATSKA, OSN: 739,79, PDV: 184,95, Iznos: 924,74</div>
</body></html>
